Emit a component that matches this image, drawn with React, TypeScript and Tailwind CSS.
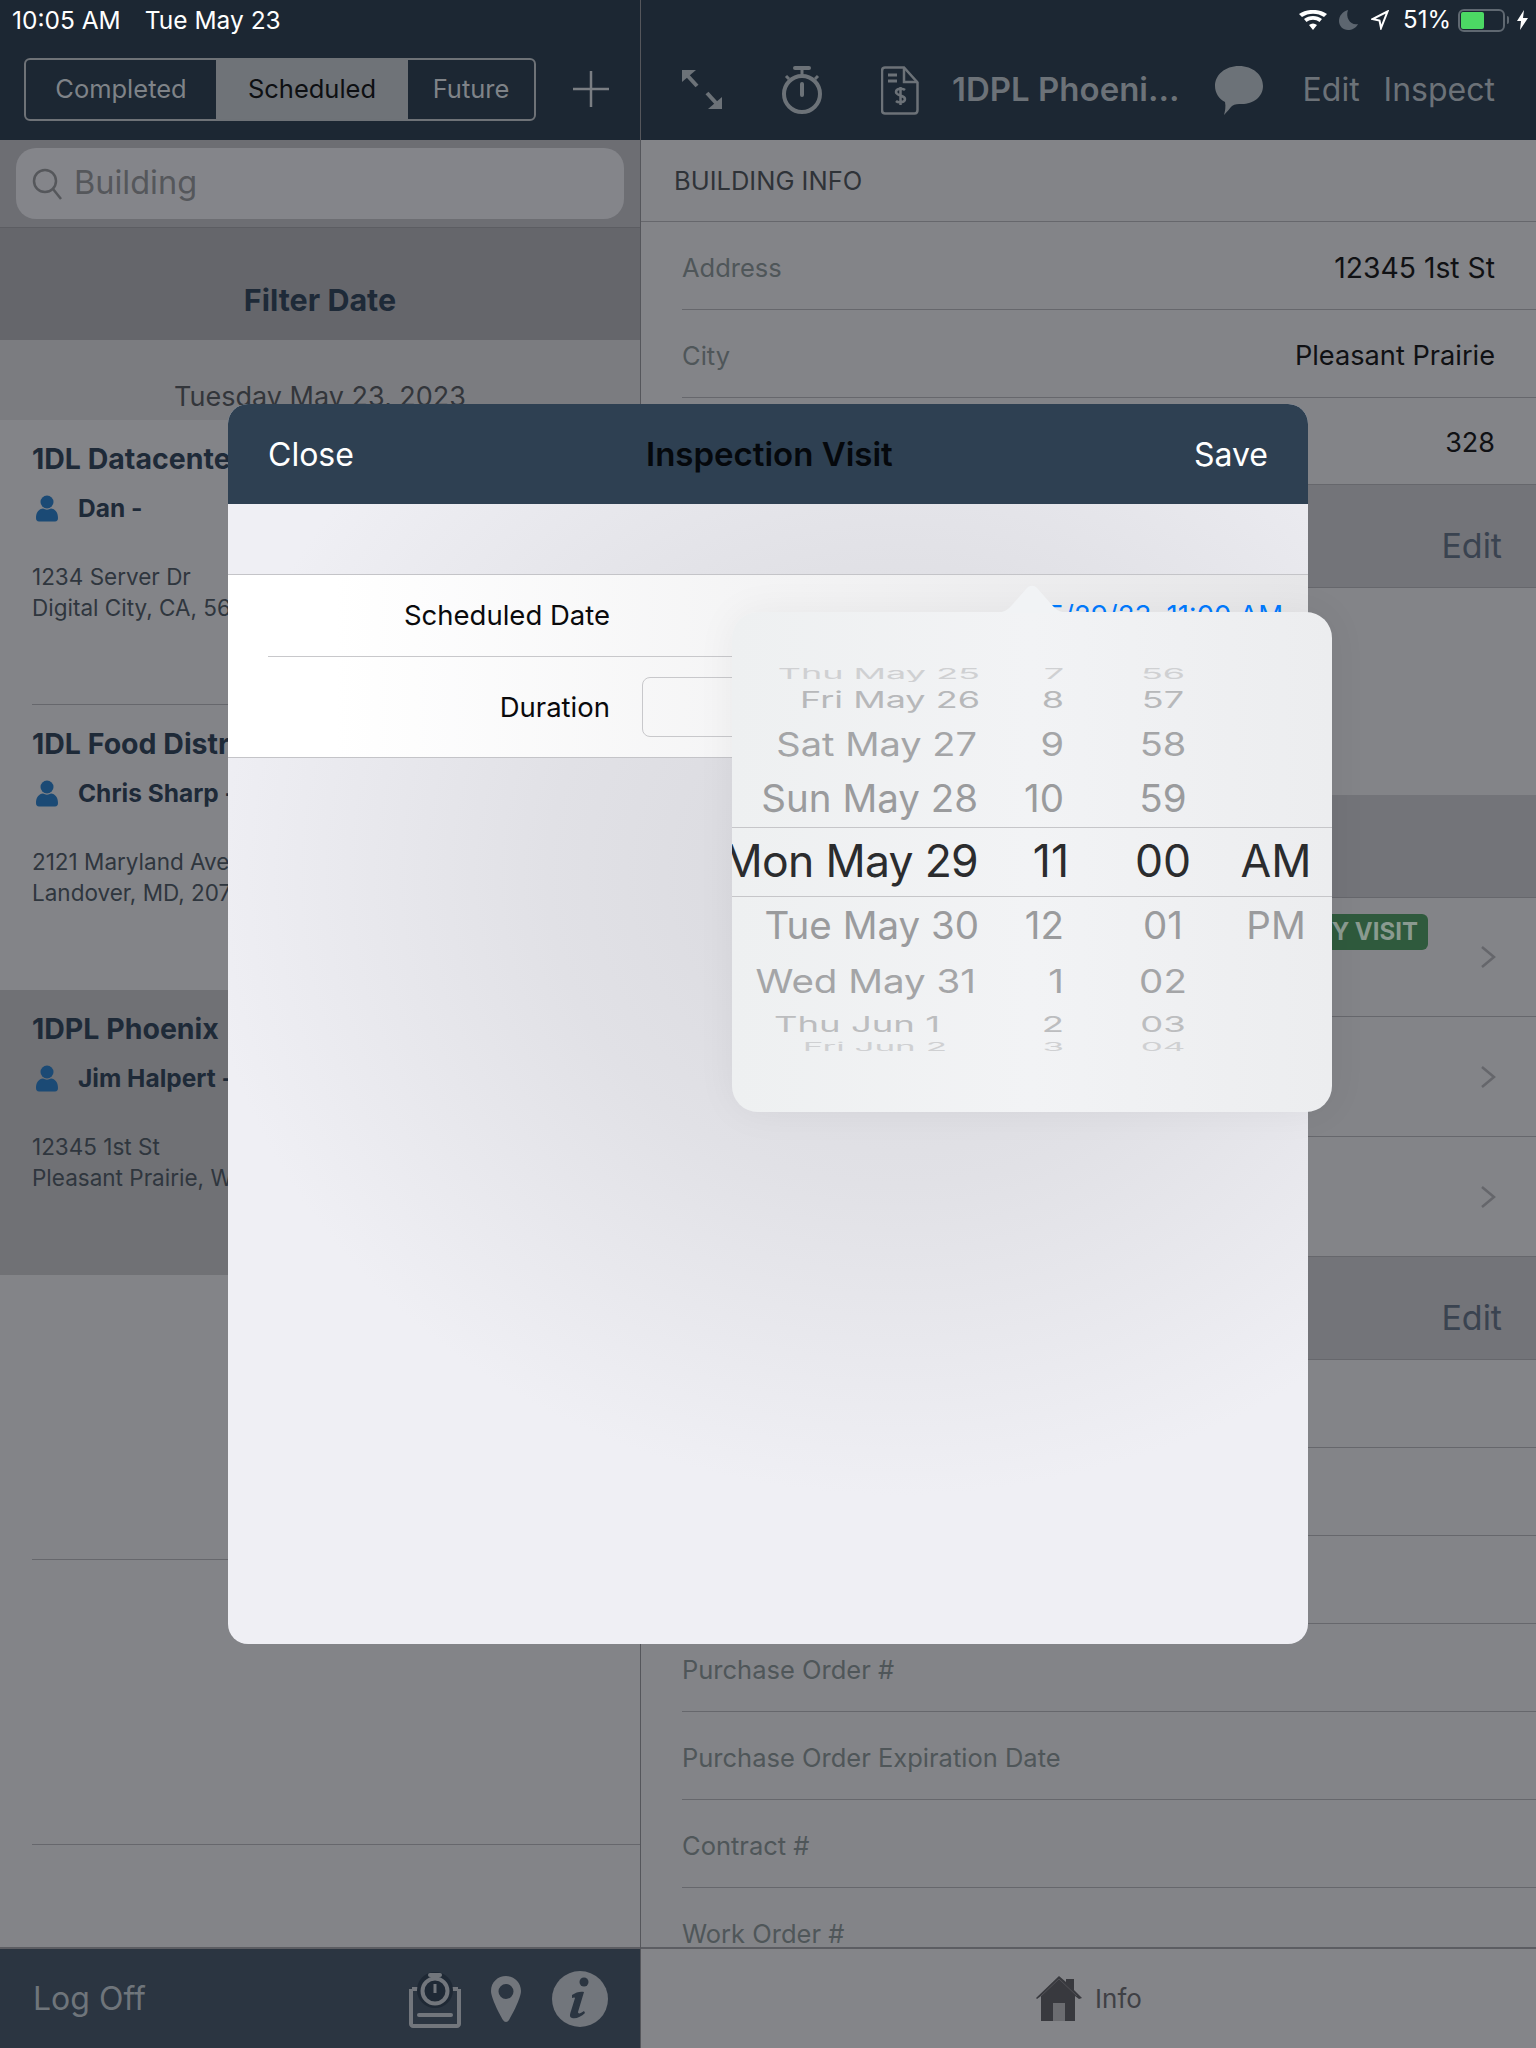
import React from 'react';

const NavIconColor = '#6c7278';

const PersonIcon = () => (
  <svg width="24" height="27" viewBox="0 0 24 27" className="shrink-0">
    <circle cx="12" cy="7" r="6.5" fill="#1b4a75" />
    <path d="M1 23c0-6 3-9 7-9.5 2.500 1.500 5.500 1.500 8 0 4 .5 7 3.500 7 9.500 0 2-1 3.500-3 3.500H4c-2 0-3-1.500-3-3.500z" fill="#1b4a75" />
  </svg>
);

const Chevron = () => (
  <svg width="16" height="24" viewBox="0 0 16 24" fill="none" stroke="#65666b" strokeWidth="2.500">
    <path d="M2 2l12 10L2 22" />
  </svg>
);

const Card = ({ title, contact, lines, selected, border = true }: { title: string; contact: string; lines: string[]; selected?: boolean; border?: boolean }) => (
  <div className={`h-[285px] shrink-0 pl-8 ${selected ? 'bg-[#707175]' : ''}`}>
    <div className={`h-full flex flex-col ${border ? 'border-b border-[#66676c]' : ''}`}>
      <div className="mt-[21px] h-9 flex items-center text-[28.500px] font-bold text-[#1e2a38] whitespace-nowrap">{title}</div>
      <div className="mt-[13px] h-9 flex items-center gap-[19px] pl-[3px] text-[24.500px] font-bold text-[#1e2a38] whitespace-nowrap">
        <PersonIcon />
        {contact}
      </div>
      <div className="mt-[35px] text-[22.500px] leading-[31px] text-[#2f363e] whitespace-nowrap">
        {lines.map(l => <div key={l}>{l}</div>)}
      </div>
    </div>
  </div>
);

const InfoRow = ({ label, value, wide }: { label?: string; value?: string; wide?: boolean }) => (
  <div className="h-[88px] shrink-0 pl-[41px]">
    <div className="h-full flex items-center justify-between pr-[41px] pt-[5px] border-b border-[#66676c]">
      <span className="text-[25.500px] text-[#4f5659]">{label}</span>
      <span className={`${wide ? 'text-[28.300px]' : 'text-[27.200px]'} text-[#101114]`}>{value}</span>
    </div>
  </div>
);

const EditBand = ({ showEdit = true }: { showEdit?: boolean }) => (
  <div className="h-[103px] shrink-0 bg-[#737479] border-b border-[#66676c] flex items-center justify-end pr-[34px] pt-[18px]">
    {showEdit && <span className="text-[34px] text-[#3a4350]">Edit</span>}
  </div>
);

const wheelRows = [
  { h: 'h-[16px]', date: 'Thu May 25', hour: '7', min: '56', ampm: '', text: 'text-[36px] scale-y-[0.42] text-[#cfd0d2]', dateShift: 'pr-0' },
  { h: 'h-[36px]', date: 'Fri May 26', hour: '8', min: '57', ampm: '', text: 'text-[36px] scale-y-[0.62] text-[#b7b8ba]', dateShift: 'pr-0' },
  { h: 'h-[52px]', date: 'Sat May 27', hour: '9', min: '58', ampm: '', text: 'text-[38px] scale-y-[0.84] text-[#a4a5a7]', dateShift: 'pr-[3px]' },
  { h: 'h-[57px]', date: 'Sun May 28', hour: '10', min: '59', ampm: '', text: 'text-[38.500px] text-[#9a9b9d]', dateShift: 'pr-[2px]' },
  { h: 'h-[69px]', date: 'Mon May 29', hour: '11', min: '00', ampm: 'AM', text: 'text-[44.500px] text-[#2b2c2e]', dateShift: 'pr-[2px] tracking-[-0.7px]', selected: true },
  { h: 'h-[60px]', date: 'Tue May 30', hour: '12', min: '01', ampm: 'PM', text: 'text-[38.500px] text-[#9a9b9d]', dateShift: 'pr-[1px]' },
  { h: 'h-[52px]', date: 'Wed May 31', hour: '1', min: '02', ampm: '', text: 'text-[38.500px] scale-y-[0.84] text-[#a4a5a7]', dateShift: 'pr-[4px]' },
  { h: 'h-[32px]', date: 'Thu Jun 1', hour: '2', min: '03', ampm: '', text: 'text-[36.500px] scale-y-[0.6] text-[#bcbdbf]', dateShift: 'pr-[40px]' },
  { h: 'h-[15px]', date: 'Fri Jun 2', hour: '3', min: '04', ampm: '', text: 'text-[35px] scale-y-[0.32] text-[#cfd0d2]', dateShift: 'pr-[33px]' },
];

const DatePopover = () => (
  <div className="absolute left-[504px] top-[208px] w-[600px] h-[500px] rounded-[26px] bg-gradient-to-r from-[#eef0f1] via-[#f2f3f5] to-[#ecedef] shadow-[0_0_40px_rgba(0,0,0,0.05)]">
    <svg width="78" height="28" viewBox="0 0 78 28" className="absolute left-[261px] -top-[27px]">
      <path d="M0 28c9 0 14-2 19-8L34 3c3-3 7-3 10 0l15 17c5 6 10 8 19 8z" fill="#f1f3f5" />
    </svg>
    <div className="relative mt-[54px] h-[389px] overflow-hidden">
      <div className="absolute left-0 right-0 top-[161px] h-[70px] border-y border-[#c6c6c9]" />
      {wheelRows.map(r => (
        <div key={r.date} className={`${r.h} flex overflow-hidden`}>
          <div className={`w-[248px] shrink-0 flex items-center justify-end whitespace-nowrap ${r.dateShift}`}>
            <span className={`block ${r.text}`}>{r.date}</span>
          </div>
          <div className={`w-[84px] shrink-0 flex items-center justify-end ${r.selected ? 'translate-x-[5px]' : ''}`}>
            <span className={`block ${r.text}`}>{r.hour}</span>
          </div>
          <div className="w-[150px] ml-[24px] shrink-0 flex items-center justify-center">
            <span className={`block ${r.text}`}>{r.min}</span>
          </div>
          <div className="w-[76px] shrink-0 flex items-center justify-center">
            <span className={`block ${r.text}`}>{r.ampm}</span>
          </div>
        </div>
      ))}
    </div>
  </div>
);

const VisitModal = () => (
  <div className="absolute left-[228px] top-[404px] w-[1080px] h-[1240px] rounded-[20px] bg-[radial-gradient(ellipse_700px_620px_at_62%_38%,#d8d8dd_0%,#e1e1e6_50%,#efeff4_100%)]">
    <div className="h-[100px] rounded-t-[20px] bg-[#2e4052] flex items-center justify-between px-10 pt-[1px] text-[32px] text-white">
      <span>Close</span>
      <span className="mr-[9px] text-[33px] font-semibold text-[#05080c]">Inspection Visit</span>
      <span>Save</span>
    </div>
    <div className="h-[71px] border-b border-[#c4c4c8]" />
    <div className="h-[183px] border-b border-[#c4c4c8] bg-gradient-to-r from-white from-10% to-[#e6e6e8] text-[27.500px] text-[#0a0a0c]">
      <div className="ml-10 h-[82px] border-b border-[#c8c8cb] flex items-center">
        <span className="w-[342px] text-right">Scheduled Date</span>
        <span className="ml-auto mr-[25px] text-[#007aff]">05/29/23, 11:00 AM</span>
      </div>
      <div className="ml-10 h-[100px] flex items-center">
        <span className="w-[342px] pt-[1px] text-right">Duration</span>
        <div className="ml-[32px] w-[400px] h-[60px] rounded-lg border border-[#c8c8cb]" />
      </div>
    </div>
    <DatePopover />
  </div>
);

export default function App() {
  return (
    <div className="relative w-[1536px] h-[2048px] overflow-hidden flex bg-[#838488] font-[family-name:Inter,sans-serif]">
      {/* master list */}
      <div className="w-[641px] shrink-0 h-full flex flex-col border-r border-[#55565b]">
        <div className="h-[140px] shrink-0 bg-[#1c2733]">
          <div className="h-[40px] pl-3 flex items-center gap-[24px] text-[24.500px] text-white whitespace-nowrap">
            <span>10:05 AM</span>
            <span>Tue May 23</span>
          </div>
          <div className="h-[100px] pl-6 pb-[2px] flex items-center">
            <div className="w-[512px] h-[63px] flex rounded-[6px] border-2 border-[#6e7277] overflow-hidden text-[25.500px] text-[#7f8388]">
              <div className="w-[190px] flex items-center justify-center pt-[1px]">Completed</div>
              <div className="w-[192px] flex items-center justify-center pt-[1px] bg-[#6f7378] text-[#0d0f12]">Scheduled</div>
              <div className="flex-1 flex items-center justify-center pt-[1px]">Future</div>
            </div>
            <svg width="38" height="38" viewBox="0 0 38 38" className="ml-[36px]" stroke="#7a7e83" strokeWidth="2.500">
              <path d="M19 1v36M1 19h36" />
            </svg>
          </div>
        </div>
        <div className="h-[88px] shrink-0 bg-[#6d6e73] border-b border-[#5c5d62] px-4 pt-2">
          <div className="h-[71px] rounded-[20px] bg-[#84858a] flex items-center pl-4 gap-[12px] text-[32.500px] text-[#55575b]">
            <svg width="30" height="32" viewBox="0 0 30 32" fill="none" stroke="#55575b" strokeWidth="2.500">
              <circle cx="13" cy="13" r="11" />
              <path d="M21 21l8 10" />
            </svg>
            Building
          </div>
        </div>
        <div className="h-[112px] shrink-0 bg-[#65666b] flex items-end justify-center pb-[17px] text-[30.500px] font-bold text-[#1e2a38]">
          Filter Date
        </div>
        <div className="h-[80px] shrink-0 bg-[#7b7c80]">
          <div className="h-[66px] overflow-hidden flex justify-center pt-[40px] text-[27px] leading-[34px] text-[#33363b] whitespace-nowrap">
            Tuesday May 23, 2023
          </div>
        </div>
        <Card title="1DL Datacenter" contact="Dan -" lines={['1234 Server Dr', 'Digital City, CA, 56789']} />
        <Card title="1DL Food Distribution" contact="Chris Sharp -" lines={['2121 Maryland Ave', 'Landover, MD, 20785']} border={false} />
        <Card title="1DPL Phoenix" contact="Jim Halpert -" lines={['12345 1st St', 'Pleasant Prairie, WI']} selected border={false} />
        <div className="h-[285px] shrink-0 pl-8"><div className="h-full border-b border-[#66676c]" /></div>
        <div className="h-[285px] shrink-0 pl-8"><div className="h-full border-b border-[#66676c]" /></div>
        <div className="flex-1" />
        <div className="h-[101px] shrink-0 bg-[#2b3541] border-t-2 border-[#5c5d62] flex items-center pl-[33px] pr-[32px]">
          <span className="text-[32px] text-[#6f757b]">Log Off</span>
          <div className="ml-auto flex items-center">
            <svg width="52" height="56" viewBox="0 0 52 56" className="mt-[2px]">
              <path d="M3 17h7M42 17h7M2 17v35c0 1 1 2 2 2h44c1 0 2-1 2-2V17" fill="none" stroke="#72767c" strokeWidth="4" strokeLinejoin="round" />
              <circle cx="26" cy="18" r="18" fill="#1f2935" />
              <circle cx="26" cy="19" r="12.500" fill="none" stroke="#72767c" strokeWidth="4" />
              <path d="M26 12v9" stroke="#72767c" strokeWidth="3" />
              <path d="M21 3h10" stroke="#72767c" strokeWidth="4" strokeLinecap="round" />
              <path d="M10 43h32" stroke="#72767c" strokeWidth="4" strokeLinecap="round" />
            </svg>
            <svg width="30" height="46" viewBox="0 0 30 46" className="ml-[30px]">
              <path fillRule="evenodd" d="M15 0C7 0 0 6 0 15c0 7 9 24 12 29 1.500 2.500 4.500 2.500 6 0 3-5 12-22 12-29C30 6 23 0 15 0zm0 8a7.500 7.500 0 110 15 7.500 7.500 0 010-15z" fill="#72767c" />
            </svg>
            <svg width="56" height="56" viewBox="0 0 56 56" className="ml-[31px]">
              <circle cx="28" cy="28" r="28" fill="#72767c" />
              <circle cx="32" cy="11" r="4.500" fill="#2b3541" />
              <path d="M20 24c4-3 9-4 12-3l-6 20c0 2 2 2 6-1l1 2c-4 4-9 6-13 5-3-1-2-4-1-7l4-13c-1-1-2 0-3 0z" fill="#2b3541" />
            </svg>
          </div>
        </div>
      </div>

      {/* detail */}
      <div className="flex-1 h-full flex flex-col min-w-0">
        <div className="h-[140px] shrink-0 bg-[#1c2733]">
          <div className="h-[40px] flex items-center justify-end pr-2 text-[24px] text-white">
            <svg width="28" height="20" viewBox="0 0 28 20" className="mr-[12px]">
              <path d="M14 20l-4-5c2.500-2 5.500-2 8 0zM7.500 12L5 9c5-4 13-4 18 0l-2.500 3c-4-3-9-3-13 0zM3 7L0 4c8-5.500 20-5.500 28 0l-3 3C19 2.500 9 2.500 3 7z" fill="#fff" />
            </svg>
            <svg width="19" height="20" viewBox="0 0 19 20" className="mr-[13px]">
              <path d="M9 0C3 2 0 6 0 11c0 5 4 9 9 9 4 0 8-2 10-6-7 2-13-6-10-14z" fill="#5d6670" />
            </svg>
            <svg width="18" height="20" viewBox="0 0 18 20" fill="none" stroke="#fff" strokeWidth="2" className="mr-[14px]">
              <path d="M16.500 1.500L1.500 9l7 1.500L10 18z" />
            </svg>
            <span className="mr-[7px]">51%</span>
            <div className="w-[47px] h-[23px] rounded-[6px] border-2 border-[#5f6871] p-[1px]">
              <div className="w-[23px] h-full rounded-[2px] bg-[#4cd964]" />
            </div>
            <div className="ml-[2px] w-[2px] h-2 rounded-r bg-[#5f6871]" />
            <svg width="11" height="20" viewBox="0 0 11 20" className="ml-[8px]">
              <path d="M7 0L0 11h4l-1 9 8-12H6z" fill="#fff" />
            </svg>
          </div>
          <div className="h-[100px] pl-10 pr-[41px] flex items-center text-[#6c7278]">
            <svg width="42" height="41" viewBox="0 0 42 41" className="shrink-0 mt-[-1px]" stroke={NavIconColor} fill="none">
              <path d="M1 1h14L1 13z" fill={NavIconColor} stroke="none" />
              <path d="M6 6l10 11" strokeWidth="4" />
              <path d="M41 40H27l14-12z" fill={NavIconColor} stroke="none" />
              <path d="M36 35L26 24" strokeWidth="4" />
            </svg>
            <svg width="42" height="48" viewBox="0 0 42 48" className="ml-[58px] shrink-0" fill="none" stroke={NavIconColor} strokeWidth="4">
              <circle cx="21" cy="28" r="18" />
              <path d="M14 2h14" strokeWidth="4" strokeLinecap="round" />
              <path d="M21 3v6M5 10l3 3M37 10l-3 3" strokeWidth="3" />
              <path d="M21 18v11" strokeWidth="4" strokeLinecap="round" />
            </svg>
            <svg width="38" height="49" viewBox="0 0 38 49" className="ml-[58px] shrink-0" fill="none" stroke={NavIconColor} strokeWidth="2.500">
              <path d="M4 1.500h19l13.500 15V44c0 2-1 3.500-3 3.500H4c-2 0-3-1.500-3-3.500V5c0-2 1-3.500 3-3.500z" />
              <path d="M23 1.500V16h13.500" />
              <path d="M7 9h9M7 15h9" strokeWidth="3" />
              <path d="M24 24c-2-2-9-2-9 2s9 3 9 7-7 4-9 2M19.500 21v18" strokeWidth="2.500" />
            </svg>
            <span className="ml-[33px] text-[33px] font-semibold whitespace-nowrap">1DPL Phoeni...</span>
            <svg width="48" height="49" viewBox="0 0 48 49" className="ml-[35px] shrink-0">
              <path d="M24 0c14 0 24 9 24 20S38 38 27 38c-4 0-7 0-10 2-2 2-5 6-8 9 1-4 2-8 1-13C4 33 0 27 0 20 0 9 10 0 24 0z" fill={NavIconColor} />
            </svg>
            <span className="ml-auto text-[32px]">Edit</span>
            <span className="ml-[24px] text-[32px]">Inspect</span>
          </div>
        </div>
        <div className="h-[82px] shrink-0 border-b border-[#66676c] flex items-center pl-[33px] pt-[2px] text-[25.500px] text-[#2f3338]">
          BUILDING INFO
        </div>
        <InfoRow label="Address" value="12345 1st St" wide />
        <InfoRow label="City" value="Pleasant Prairie" />
        <div className="h-[87px] shrink-0 border-b border-[#66676c] flex items-center justify-end pr-[41px] pt-[5px] text-[27px] text-[#101114]">328</div>
        <EditBand />
        <div className="h-[207px] shrink-0" />
        <EditBand showEdit={false} />
        <div className="h-[119px] shrink-0 border-b border-[#66676c] relative flex items-center justify-end pr-[40px]">
          <div className="absolute left-[679px] top-[16px] w-[108px] h-9 rounded-[6px] bg-[#2f5a3d] flex items-center justify-end pr-[10px] text-[24px] font-bold text-[#8a9a90] whitespace-nowrap">Y VISIT</div>
          <Chevron />
        </div>
        <div className="h-[120px] shrink-0 border-b border-[#66676c] flex items-center justify-end pr-[40px]"><Chevron /></div>
        <div className="h-[120px] shrink-0 border-b border-[#66676c] flex items-center justify-end pr-[40px]"><Chevron /></div>
        <EditBand />
        <InfoRow />
        <InfoRow />
        <InfoRow />
        <InfoRow label="Purchase Order #" />
        <InfoRow label="Purchase Order Expiration Date" />
        <InfoRow label="Contract #" />
        <div className="flex-1 min-h-0 pl-[41px] flex items-start pt-[27px] overflow-hidden text-[25.500px] text-[#4f5659]">Work Order #</div>
        <div className="h-[101px] shrink-0 border-t-2 border-[#5c5d62] bg-[#848589] flex items-center justify-center gap-[13px] pl-[1px]">
          <svg width="46" height="46" viewBox="0 0 46 46">
            <path d="M23 0L0 22l1 1 4-3v25h34V20l4 3 3-1-8-8V3h-8v3z" fill="#38393e" />
            <path d="M5 20L23 3l18 17" fill="none" stroke="#55565b" strokeWidth="0.800" />
            <rect x="17" y="27" width="12" height="18" fill="#6b6c70" />
          </svg>
          <span className="text-[26px] text-[#3f4045]">Info</span>
        </div>
      </div>

      <VisitModal />
    </div>
  );
}
